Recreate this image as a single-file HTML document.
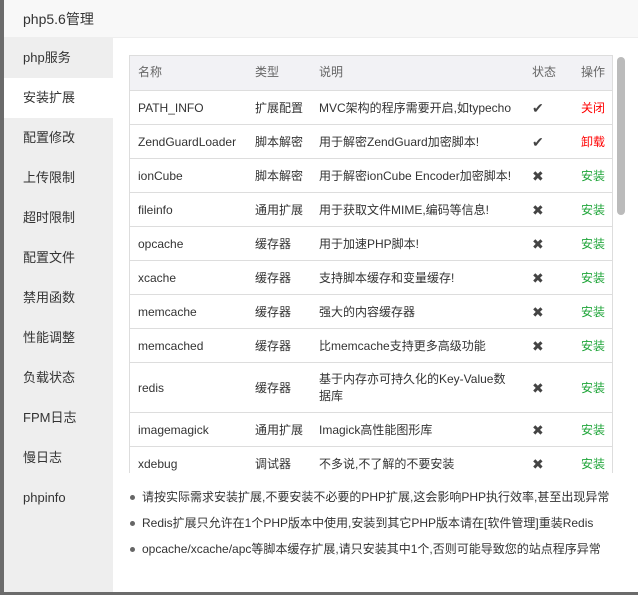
<!DOCTYPE html>
<html><head><meta charset="utf-8"><style>
*{margin:0;padding:0;box-sizing:border-box}
body{width:638px;height:595px;overflow:hidden;background:#6b6b6b;font-family:"Liberation Sans","Noto Sans CJK SC",sans-serif;font-size:13px;color:#333;position:relative}
.dlg{position:absolute;left:4px;top:0;width:634px;height:592px;background:#fff}
.title{height:38px;background:#f8f8f8;border-bottom:1px solid #eee;padding-left:19px;line-height:38px;font-size:14px;color:#333}
.side{position:absolute;left:0;top:38px;width:109px;height:554px;background:#eee}
.side div{height:40px;line-height:40px;padding-left:19px;font-size:13px;color:#333}
.side .act{background:#fff}
.main{position:absolute;left:109px;top:38px;right:0;bottom:0;background:#fff}
.tw{position:absolute;left:16px;top:17px;width:484px;height:418px;overflow:hidden;border:1px solid #ddd;border-bottom:none}
table{border-collapse:collapse;width:484px;table-layout:fixed}
td,th{padding:0 8px;text-align:left;font-weight:normal;border-bottom:1px solid #ddd;font-size:12px;white-space:nowrap;overflow:hidden;line-height:17px}
th{background:#f2f2f5;color:#666;height:34px}
td{height:34px;color:#333;padding-top:2px}
td.w{white-space:normal;height:50px}
td.i{font-size:14px;color:#444}
.ok{color:#20a53a}.red{color:#f00}
.sb{position:absolute;left:504px;top:19px;width:8px;height:158px;background:#bbb;border-radius:4px}
ul{position:absolute;left:17px;top:449px;list-style:none}
li{height:26px;line-height:20px;font-size:12px;color:#333;padding-left:12px;position:relative;white-space:nowrap}
li:before{content:"";position:absolute;left:0;top:8px;width:5px;height:5px;border-radius:50%;background:#666}
</style></head><body>
<div class="dlg">
<div class="title">php5.6管理</div>
<div class="side">
<div>php服务</div><div class="act">安装扩展</div><div>配置修改</div><div>上传限制</div><div>超时限制</div><div>配置文件</div><div>禁用函数</div><div>性能调整</div><div>负载状态</div><div>FPM日志</div><div>慢日志</div><div>phpinfo</div>
</div>
<div class="main">
<div class="tw"><table>
<colgroup><col style="width:117px"><col style="width:64px"><col style="width:213px"><col style="width:49px"><col style="width:41px"></colgroup>
<tr><th>名称</th><th>类型</th><th>说明</th><th>状态</th><th>操作</th></tr>
<tr><td>PATH_INFO</td><td>扩展配置</td><td>MVC架构的程序需要开启,如typecho</td><td class="i">✔</td><td class="red">关闭</td></tr>
<tr><td>ZendGuardLoader</td><td>脚本解密</td><td>用于解密ZendGuard加密脚本!</td><td class="i">✔</td><td class="red">卸载</td></tr>
<tr><td>ionCube</td><td>脚本解密</td><td>用于解密ionCube Encoder加密脚本!</td><td class="i">✖</td><td class="ok">安装</td></tr>
<tr><td>fileinfo</td><td>通用扩展</td><td>用于获取文件MIME,编码等信息!</td><td class="i">✖</td><td class="ok">安装</td></tr>
<tr><td>opcache</td><td>缓存器</td><td>用于加速PHP脚本!</td><td class="i">✖</td><td class="ok">安装</td></tr>
<tr><td>xcache</td><td>缓存器</td><td>支持脚本缓存和变量缓存!</td><td class="i">✖</td><td class="ok">安装</td></tr>
<tr><td>memcache</td><td>缓存器</td><td>强大的内容缓存器</td><td class="i">✖</td><td class="ok">安装</td></tr>
<tr><td>memcached</td><td>缓存器</td><td>比memcache支持更多高级功能</td><td class="i">✖</td><td class="ok">安装</td></tr>
<tr><td>redis</td><td>缓存器</td><td class="w">基于内存亦可持久化的Key-Value数据库</td><td class="i">✖</td><td class="ok">安装</td></tr>
<tr><td>imagemagick</td><td>通用扩展</td><td>Imagick高性能图形库</td><td class="i">✖</td><td class="ok">安装</td></tr>
<tr><td>xdebug</td><td>调试器</td><td>不多说,不了解的不要安装</td><td class="i">✖</td><td class="ok">安装</td></tr>
</table></div>
<div class="sb"></div>
<ul>
<li>请按实际需求安装扩展,不要安装不必要的PHP扩展,这会影响PHP执行效率,甚至出现异常</li>
<li>Redis扩展只允许在1个PHP版本中使用,安装到其它PHP版本请在[软件管理]重装Redis</li>
<li>opcache/xcache/apc等脚本缓存扩展,请只安装其中1个,否则可能导致您的站点程序异常</li>
</ul>
</div>
</div>
</body></html>
